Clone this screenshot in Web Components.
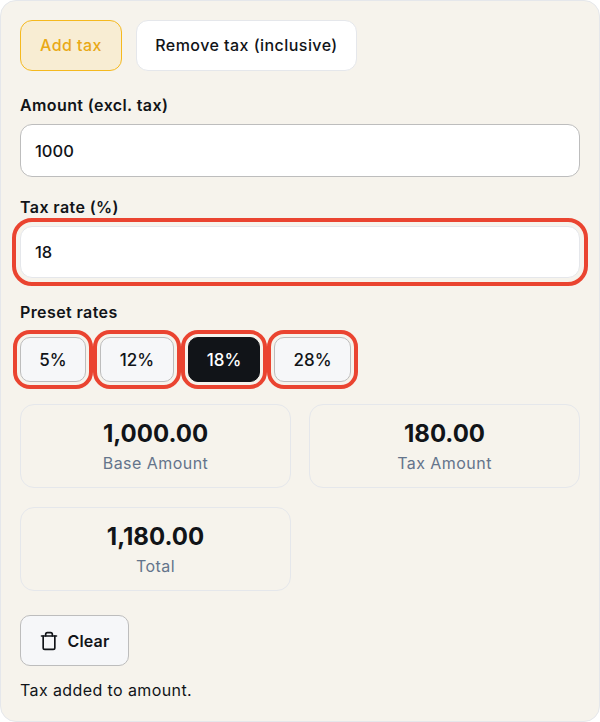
<!DOCTYPE html>
<html>
<head>
<meta charset="utf-8">
<style>
  html,body{ margin:0; padding:0; background:#fff; }
  body{ font-family:'Inter','Liberation Sans',sans-serif; color:#111418; }
  field-box:first-of-type{ margin-top:24px; }
  field-box + field-box{ margin-top:20px; }
</style>
</head>
<body>
<tax-panel>
  <mode-tabs></mode-tabs>
  <field-box label="Amount (excl. tax)" value="1000"></field-box>
  <field-box label="Tax rate (%)" value="18" marked></field-box>
  <preset-rates></preset-rates>
  <result-grid>
    <result-card value="1,000.00" name="Base Amount"></result-card>
    <result-card value="180.00" name="Tax Amount"></result-card>
    <result-card value="1,180.00" name="Total"></result-card>
  </result-grid>
  <clear-button></clear-button>
  <p-note>Tax added to amount.</p-note>
</tax-panel>

<script>
const make = (name, css, html) => {
  customElements.define(name, class extends HTMLElement{
    constructor(){
      super()
      const root = this.attachShadow({mode:'open'})
      root.innerHTML = `<style>${css}</style>` + (typeof html === 'function' ? html(this) : html)
    }
  })
}

make('tax-panel', `
  :host{
    display:block; box-sizing:border-box; width:600px; height:722px;
    padding:19px 19px 0; background:#f6f3ec;
    border:1px solid #e5e7eb; border-radius:16px;
  }
`, `<slot></slot>`)

make('mode-tabs', `
  :host{ display:flex; gap:14px; }
  button{
    box-sizing:border-box; height:51px; border-radius:12px; font:500 16px 'Inter',sans-serif; letter-spacing:.45px;
    padding:0 0 2px; background:#fff; border:1px solid #e5e7eb; color:#111418;
  }
  .on{ width:102px; background:#f8edd3; border-color:#f5b91f; color:#e9a917; }
  .off{ width:221px; }
`, `<button class="on">Add tax</button><button class="off">Remove tax (inclusive)</button>`)

make('field-box', `
  :host{ display:block; }
  label{ display:block; font:600 16px/20px 'Inter',sans-serif; letter-spacing:.4px; color:#111418; margin:0 0 9px; }
  .box{
    box-sizing:border-box; height:53px; background:#fff; border:1px solid #bdbdbd; border-radius:12px;
    padding:0 14px; display:flex; align-items:center; font:500 16.5px 'Inter',sans-serif; color:#111418;
  }
  :host([marked]) .box{ height:52px; border-color:#e5e7eb; outline:4px solid #ea4430; outline-offset:4px; }
`, el => `<label>${el.getAttribute('label')}</label><div class="box">${el.getAttribute('value')}</div>`)

make('preset-rates', `
  :host{ display:block; margin-top:24px; }
  label{ display:block; font:600 16px/20px 'Inter',sans-serif; letter-spacing:.4px; margin:0 0 15px; color:#111418; }
  .row{ display:flex; gap:14px; }
  button{
    box-sizing:border-box; height:45px; padding:0; border-radius:10px;
    background:#f6f7f9; border:1px solid #bdbdbd; color:#111418; font:500 17px 'Inter',sans-serif;
    outline:4px solid #ea4430; outline-offset:3px;
  }
  .on{ background:#111418; border-color:#111418; color:#fff; }
`, `<label>Preset rates</label><div class="row">
  <button style="width:66px">5%</button>
  <button style="width:74px">12%</button>
  <button class="on" style="width:72px">18%</button>
  <button style="width:77px">28%</button>
</div>`)

make('result-grid', `
  :host{ display:grid; grid-template-columns:271px 271px; column-gap:18px; row-gap:19px; margin-top:22px; }
`, `<slot></slot>`)

make('result-card', `
  :host{
    display:flex; flex-direction:column; align-items:center; box-sizing:border-box; height:84px;
    padding-top:14px; border:1px solid #e5e7eb; border-radius:14px;
  }
  b{ font:700 24px/30px 'Inter',sans-serif; color:#111418; }
  span{ font:400 16px/20px 'Inter',sans-serif; letter-spacing:.45px; color:#64748b; margin-top:4px; }
`, el => `<b>${el.getAttribute('value')}</b><span>${el.getAttribute('name')}</span>`)

make('clear-button', `
  :host{ display:block; margin-top:24px; }
  button{
    box-sizing:border-box; width:109px; height:51px; border-radius:10px;
    display:flex; align-items:center; justify-content:center; gap:8px; padding:0;
    background:#f6f7f9; border:1px solid #bdbdbd; color:#111418; font:600 16px 'Inter',sans-serif; letter-spacing:.2px;
  }
  svg{ width:20px; height:20px; fill:none; stroke:#111418; stroke-width:2; stroke-linecap:round; stroke-linejoin:round; }
`, `<button><svg viewBox="0 0 24 24"><path d="M3 6h18"/><path d="M19 6v14a2 2 0 0 1-2 2H7a2 2 0 0 1-2-2V6"/><path d="M8 6V4a2 2 0 0 1 2-2h4a2 2 0 0 1 2 2v2"/></svg>Clear</button>`)

make('p-note', `
  :host{ display:block; margin-top:14px; font:400 16px/20px 'Inter',sans-serif; letter-spacing:.4px; color:#111418; }
`, `<slot></slot>`)
</script>
</body>
</html>
